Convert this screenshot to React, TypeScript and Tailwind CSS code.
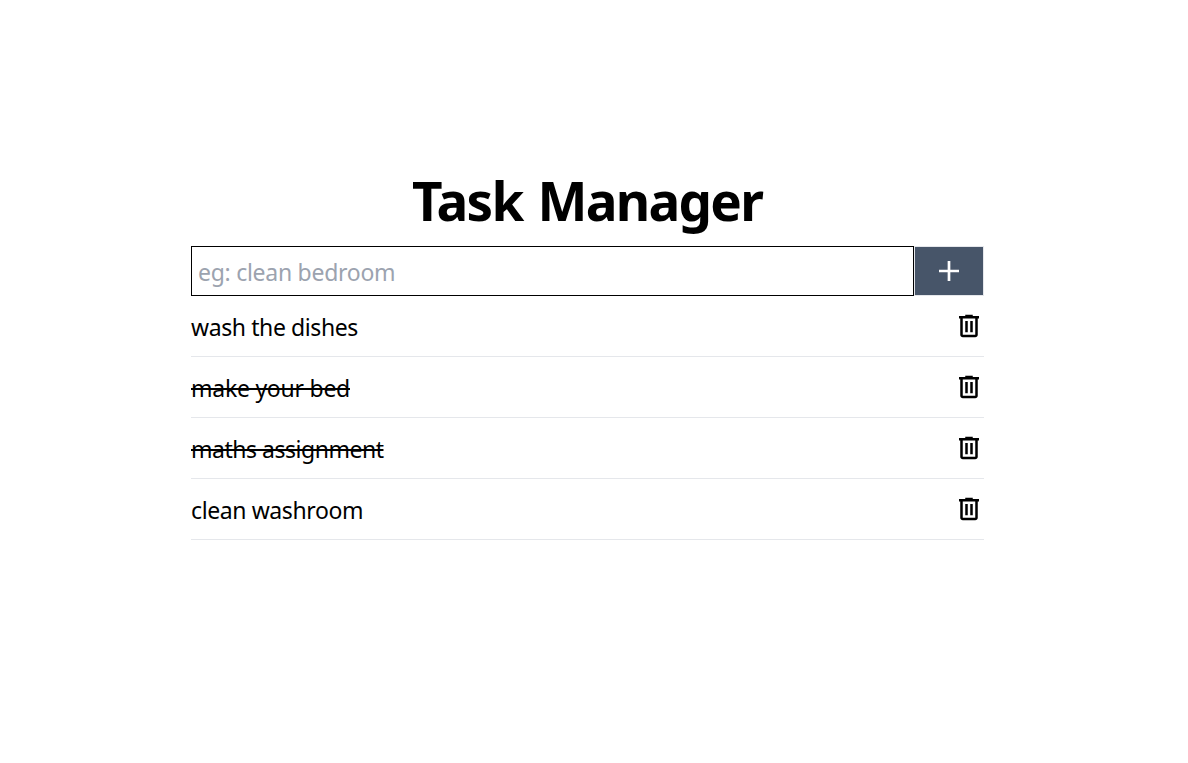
const tasks = [
  { title: "wash the dishes", done: false, spacing: "tracking-[-0.4px]" },
  { title: "make your bed", done: true, spacing: "tracking-[-0.25px]" },
  { title: "maths assignment", done: true, spacing: "tracking-[-0.48px]" },
  { title: "clean washroom", done: false, spacing: "tracking-[-0.4px]" },
];

function TrashIcon() {
  return (
    <svg viewBox="0 0 24 24" className="mt-[-1px] size-[30px]" fill="black">
      <path d="M7 21q-.825 0-1.412-.587T5 19V6H4V4h5V3h6v1h5v2h-1v13q0 .825-.587 1.413T17 21H7ZM17 6H7v13h10V6ZM9 17h2V8H9v9Zm4 0h2V8h-2v9Z" />
    </svg>
  );
}

export default function App() {
  return (
    <main className="flex h-[763px] flex-col bg-white pl-[191px] pt-[171px] font-['Noto_Sans',sans-serif] text-black">
      <div className="w-[793px]">
        <h1 className="h-[75px] pl-[221px] text-[53px] font-bold leading-[60px] tracking-[-1.75px] [word-spacing:3px] whitespace-nowrap">
          Task Manager
        </h1>
        <form className="flex h-[50px]">
          <input
            className="w-[723px] border border-black px-1.5 pt-[3px] text-[23px] tracking-[-0.27px] outline-none placeholder:text-[#9ca3af]"
            placeholder="eg: clean bedroom"
          />
          <button type="button" aria-label="Add task" className="flex w-[70px] items-center justify-center border border-[#e5e7eb] bg-[#475569]">
            <svg viewBox="0 0 20 20" className="size-5" stroke="white" strokeWidth="2.7"><path d="M10 0v20M0 10h20" /></svg>
          </button>
        </form>
        <ul>
          {tasks.map((task) => (
            <li key={task.title} className="flex h-[61px] items-center justify-between border-b border-[#e5e7eb]">
              <span className={`pt-[2px] text-[23px] ${task.spacing} ${task.done ? "line-through decoration-2" : ""}`}>{task.title}</span>
              <TrashIcon />
            </li>
          ))}
        </ul>
      </div>
    </main>
  );
}
